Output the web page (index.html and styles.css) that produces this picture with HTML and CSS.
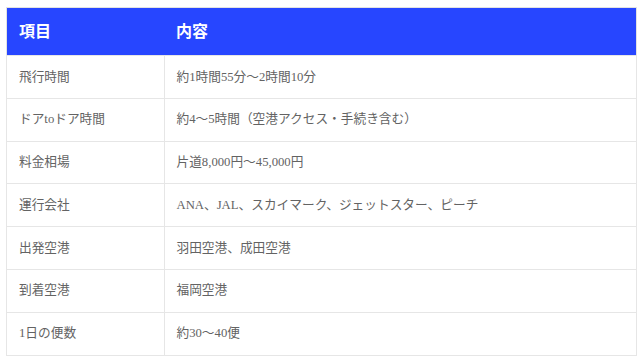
FILE: index.html
```html
<!DOCTYPE html>
<html lang="ja">
<head>
<meta charset="utf-8">
<link rel="stylesheet" href="styles.css">
</head>
<body>
<div class="wrap">
<table class="info">
<thead>
<tr><th class="c1">項目</th><th>内容</th></tr>
</thead>
<tbody>
<tr><td>飛行時間</td><td>約1時間55分～2時間10分</td></tr>
<tr><td>ドアtoドア時間</td><td>約4～5時間（空港アクセス・手続き含む）</td></tr>
<tr><td>料金相場</td><td>片道8,000円～45,000円</td></tr>
<tr><td>運行会社</td><td>ANA、JAL、スカイマーク、ジェットスター、ピーチ</td></tr>
<tr><td>出発空港</td><td>羽田空港、成田空港</td></tr>
<tr><td>到着空港</td><td>福岡空港</td></tr>
<tr><td>1日の便数</td><td>約30～40便</td></tr>
</tbody>
</table>
</div>
</body>
</html>
```

FILE: styles.css
```css
html, body {
  margin: 0;
  padding: 0;
  background: #ffffff;
}
.wrap {
  padding: 7px 5px 0 6px;
}
.info {
  width: 100%;
  border-collapse: collapse;
  border: 1px solid #e2e2e2;
  font-family: "Liberation Serif", "Noto Sans CJK JP", serif;
  font-size: 12.7px;
  color: #636363;
}
.info th {
  background: #2746ff;
  color: #ffffff;
  font-size: 16px;
  font-weight: bold;
  text-align: left;
  padding: 11px 12px;
  line-height: 25px;
  border: none;
}
.info .c1 {
  width: 25%;
}
.info td {
  padding: 10.5px 12px;
  line-height: 20.8px;
  border: 1px solid #e6e6e6;
  text-align: left;
}
```
